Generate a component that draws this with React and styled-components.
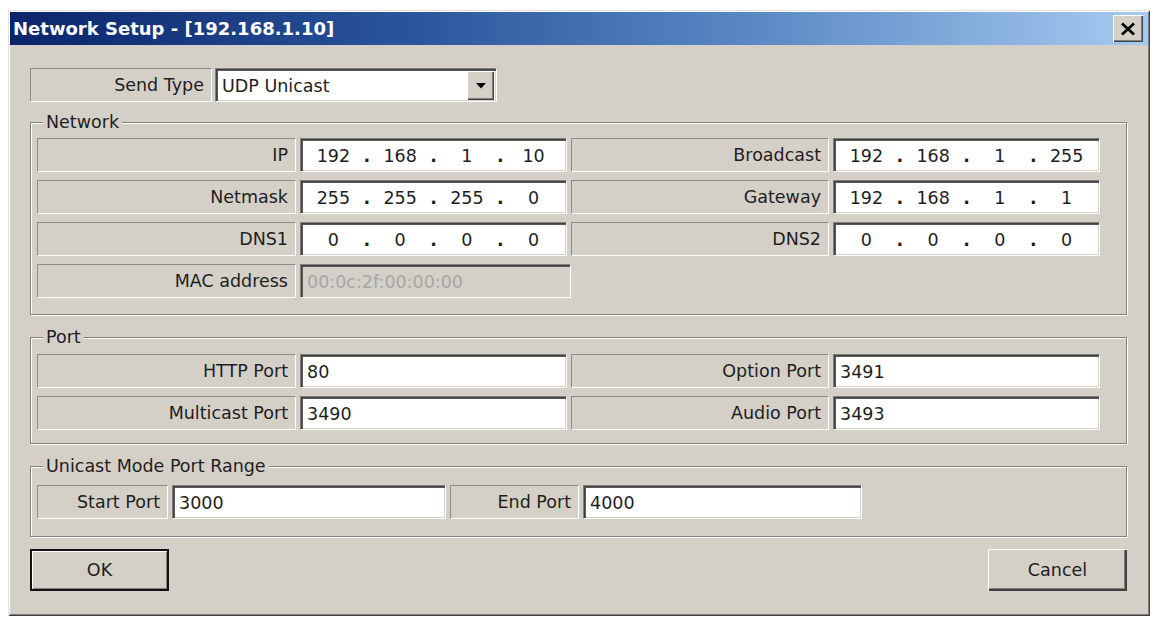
import React from 'react';
import styled, { createGlobalStyle, css } from 'styled-components';

const GlobalStyle = createGlobalStyle`
  *, *::before, *::after { box-sizing: border-box; }
  html, body { margin: 0; background: #fff; }
  body {
    font-family: "DejaVu Sans", "Liberation Sans", sans-serif;
    font-size: 17.5px;
    color: #1e1e1e;
  }
  #root { width: 1156px; height: 621px; overflow: hidden; }
`;

// classic win2k bevels
const raised = css`
  background: #d4d0c8;
  box-shadow: inset 1px 1px 0 #fff, inset -1px -1px 0 #404040, inset -2px -2px 0 #808080;
`;

const sunken = css`
  border-style: solid;
  border-width: 1px;
  border-color: #808080 #fff #fff #808080;
  box-shadow: inset 1px 1px 0 #404040, inset 2px 2px 0 #5a5a5a, inset -1px -1px 0 #d4d0c8;
`;

const Dialog = styled.div`
  width: 1142px;
  margin: 10px 0 0 8px;
  padding: 2px;
  background: #d4d0c8;
  box-shadow: inset 1px 1px 0 #e4e1db, inset -1px -1px 0 #404040, inset 2px 2px 0 #fff, inset -2px -2px 0 #808080;
`;

const TitleBar = styled.div`
  height: 33px;
  display: flex;
  align-items: center;
  justify-content: space-between;
  padding: 0 5px 0 3px;
  background: linear-gradient(to right, #0a246a 0%, #2a559c 35%, #5a88c4 65%, #a6caf0 100%);
`;

const Title = styled.span`
  color: #fff;
  font-weight: bold;
  font-size: 18px;
`;

const CloseButton = styled.button`
  ${raised};
  width: 30px;
  height: 27px;
  border: none;
  padding: 0;
  display: flex;
  align-items: center;
  justify-content: center;
`;

const Body = styled.div`
  padding: 23px 21px 23px 20px;
`;

const SendRow = styled.div`
  display: flex;
  gap: 3px;
  height: 34px;
`;

const LabelCell = styled.div`
  display: flex;
  align-items: center;
  justify-content: flex-end;
  padding-right: 7px;
  width: ${p => (p.$width ? `${p.$width}px` : 'auto')};
  background: #d4d0c8;
  border-style: solid;
  border-width: 1px;
  border-color: #8c8c8c #fff #fff #8c8c8c;
  white-space: nowrap;
`;

const Select = styled.div`
  ${sunken};
  width: 282px;
  display: flex;
  align-items: center;
  background: #fff;
  padding: 2px 2px 1px 6px;
`;

const SelectText = styled.span`
  flex: 1;
`;

const DropButton = styled.span`
  ${raised};
  width: 27px;
  height: 100%;
  display: flex;
  align-items: center;
  justify-content: center;
`;

const Group = styled.fieldset`
  margin: ${p => p.$top}px 0 0;
  padding: ${p => p.$pt}px 26px ${p => p.$pb}px 6px;
  border: 1px solid #808080;
  box-shadow: inset 1px 1px 0 #fff, 1px 1px 0 #fff;
  min-width: 0;
`;

const Legend = styled.legend`
  margin-left: 6px;
  padding: 0 3px;
  line-height: 20px;
  background: #d4d0c8;
`;

const Grid = styled.div`
  display: grid;
  grid-template-columns: ${p => p.$cols};
  grid-auto-rows: 34px;
  column-gap: 4px;
  row-gap: ${p => p.$rowGap || 8}px;
`;

const TextBox = styled.input`
  ${sunken};
  width: ${p => (p.$wide ? 'calc(100% + 4px)' : '100%')};
  height: 34px;
  margin: 0;
  padding: 2px 6px 0;
  font: inherit;
  color: #1e1e1e;
  background: #fff;
  outline: none;

  &:disabled {
    background: #d4d0c8;
    color: #a6a6a6;
    -webkit-text-fill-color: #a6a6a6;
  }
`;

const IpBox = styled.div`
  ${sunken};
  display: flex;
  align-items: center;
  padding: 2px 3px 0;
  background: #fff;
`;

const Octet = styled.span`
  flex: 1;
  text-align: center;
`;

const Dot = styled.span`
  width: 8px;
  text-align: center;
  font-weight: bold;
`;

const ButtonRow = styled.div`
  display: flex;
  justify-content: space-between;
  margin-top: 12px;
`;

const Button = styled.button`
  width: 139px;
  height: 42px;
  font: inherit;
  color: #1e1e1e;
  background: #d4d0c8;
  padding: 0;
  border: ${p => (p.$default ? '2px solid #111' : 'none')};
  box-shadow: ${p =>
    p.$default
      ? 'inset 1px 1px 0 #fff, inset -1px -1px 0 #808080'
      : 'inset 1px 1px 0 #fff, inset -2px -2px 0 #404040, inset -3px -3px 0 #808080'};
`;

function IpAddress({ value }) {
  const parts = value.split('.');
  return (
    <IpBox>
      {parts.map((p, i) => (
        <React.Fragment key={i}>
          {i > 0 && <Dot>.</Dot>}
          <Octet>{p}</Octet>
        </React.Fragment>
      ))}
    </IpBox>
  );
}

const networkCols = '259px 267px 258px 267px';

export default function App() {
  return (
    <>
      <GlobalStyle />
      <Dialog>
        <TitleBar>
          <Title>Network Setup - [192.168.1.10]</Title>
          <CloseButton aria-label="Close">
            <svg width="16" height="14" viewBox="0 0 16 14">
              <path d="M2 1.5 L14 12.5 M14 1.5 L2 12.5" stroke="#000" strokeWidth="2.8" />
            </svg>
          </CloseButton>
        </TitleBar>

        <Body>
          <SendRow>
            <LabelCell $width={182}>Send Type</LabelCell>
            <Select role="combobox">
              <SelectText>UDP Unicast</SelectText>
              <DropButton>
                <svg width="10" height="6" viewBox="0 0 10 6">
                  <polygon points="0,0 10,0 5,5.5" fill="#000" />
                </svg>
              </DropButton>
            </Select>
          </SendRow>

          <Group $top={10} $pt={6} $pb={16}>
            <Legend>Network</Legend>
            <Grid $cols={networkCols}>
              <LabelCell>IP</LabelCell>
              <IpAddress value="192.168.1.10" />
              <LabelCell>Broadcast</LabelCell>
              <IpAddress value="192.168.1.255" />

              <LabelCell>Netmask</LabelCell>
              <IpAddress value="255.255.255.0" />
              <LabelCell>Gateway</LabelCell>
              <IpAddress value="192.168.1.1" />

              <LabelCell>DNS1</LabelCell>
              <IpAddress value="0.0.0.0" />
              <LabelCell>DNS2</LabelCell>
              <IpAddress value="0.0.0.0" />

              <LabelCell>MAC address</LabelCell>
              <TextBox $wide disabled defaultValue="00:0c:2f:00:00:00" />
            </Grid>
          </Group>

          <Group $top={12} $pt={7} $pb={13}>
            <Legend>Port</Legend>
            <Grid $cols={networkCols}>
              <LabelCell>HTTP Port</LabelCell>
              <TextBox defaultValue="80" />
              <LabelCell>Option Port</LabelCell>
              <TextBox defaultValue="3491" />

              <LabelCell>Multicast Port</LabelCell>
              <TextBox defaultValue="3490" />
              <LabelCell>Audio Port</LabelCell>
              <TextBox defaultValue="3493" />
            </Grid>
          </Group>

          <Group $top={12} $pt={9} $pb={17}>
            <Legend>Unicast Mode Port Range</Legend>
            <Grid $cols="131px 274px 129px 279px">
              <LabelCell>Start Port</LabelCell>
              <TextBox defaultValue="3000" />
              <LabelCell>End Port</LabelCell>
              <TextBox defaultValue="4000" />
            </Grid>
          </Group>

          <ButtonRow>
            <Button $default>OK</Button>
            <Button>Cancel</Button>
          </ButtonRow>
        </Body>
      </Dialog>
    </>
  );
}
